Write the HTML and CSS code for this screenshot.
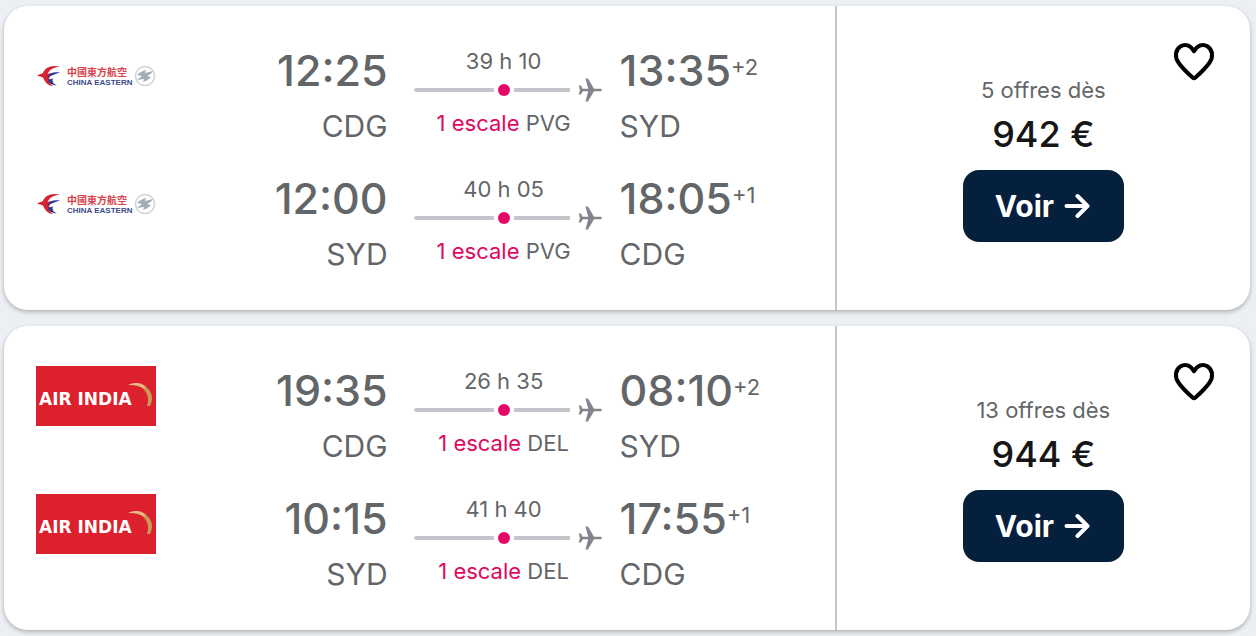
FILE: index.html
```html
<!DOCTYPE html>
<html lang="fr">
<head>
  <meta charset="UTF-8">
  <meta name="viewport" content="width=device-width, initial-scale=1.0">
  <title>Vols Paris - Sydney</title>
  <link rel="stylesheet" href="styles.css">
</head>
<body>
  <!-- shared drawings -->
  <svg class="sprite" aria-hidden="true">
    <symbol id="plane" viewBox="0 0 24 24">
      <path d="M7.500 .5h1.700c.5 0 .8.200 1.100.600l5.700 9.700h6.500c.8 0 1.300.5 1.300 1.200s-.5 1.200-1.300 1.200H16l-5.700 9.700c-.3.400-.6.600-1.100.600H7.500l2.700-10.300H4.800L2.800 16.500H.8L1.900 12 .8 7.500h2l2 3.300h5.400z"/>
    </symbol>
    <symbol id="heart" viewBox="0 0 48 48">
      <path d="M24 13.300C27.500 6.900 33 5.600 37.300 8.200c5.500 3.300 6.200 10.800 2.300 16.300C35.700 30 30 35.500 25.400 39.600c-.8.7-2 .7-2.800 0C18 35.500 12.300 30 8.400 24.500c-3.900-5.500-3.200-13 2.300-16.300C15 5.600 20.500 6.900 24 13.300z"/>
    </symbol>
    <symbol id="arrow" viewBox="0 0 26 26">
      <path d="M2.500 13h20M13.500 3l10 10-10 10"/>
    </symbol>
    <symbol id="china-eastern" viewBox="0 0 120 60">
      <path fill="#d8232f" d="M24 20.500C14 18.500 9 22 7 27l-6 2.500 6 2c2 5 5 8 10 8.700-5-5-5-9-.5-13-2.500-.2-3.500 0-5 1C13.500 23.500 17 21.500 24 20.500z"/>
      <path fill="#2b3c8f" d="M24 26.500c-7-.7-12 1-13 6.500 2-2.500 7-4.500 13-6.500zM12 33.500c0 3 3 5.500 9 6-4-2-5-4-4-7z"/>
      <circle cx="109" cy="30" r="9.500" fill="none" stroke="#d0d4d9" stroke-width="1.500"/>
      <path fill="#a3abb4" d="M101 29c3-3 6-4 9-5l-1 3 8-2c-2 3-4 4-6 5l4 1c-3 3-5 4-8 5l1-3-7 1c2-2 4-3 5-4z"/>
    </symbol>
    <symbol id="air-india" viewBox="0 0 120 60">
      <path fill="#dc202e" d="M0 0h120v60H0z"/>
      <path fill="#e9b981" d="M92 19c8-3.500 14-2 18 2l-1 3c-4-4-10-5-17-5z"/>
      <path fill="#c99a55" d="M109 20c7 5 9 12 5 20h-3c2-7 1-12-3-16z"/>
    </symbol>
  </svg>

  <main class="results">
    <article class="ticket">
      <div class="legs">
        <div class="leg">
          <svg class="airline" viewBox="0 0 120 60">
            <use href="#china-eastern"/>
            <text class="ce-cn" x="31" y="30">中國東方航空</text>
            <text class="ce-en" x="31" y="39">CHINA EASTERN</text>
          </svg>
          <div class="stop departure">
            <div class="time">12:25</div>
            <div class="airport">CDG</div>
          </div>
          <div class="route">
            <div class="duration">39 h 10</div>
            <div class="track">
              <span class="line before"></span><span class="dot"></span><span class="line after"></span>
              <svg class="plane"><use href="#plane"/></svg>
            </div>
            <div class="layover"><span class="count">1 escale</span> PVG</div>
          </div>
          <div class="stop">
            <div class="time">13:35<span class="days">+2</span></div>
            <div class="airport">SYD</div>
          </div>
        </div>
        <div class="leg">
          <svg class="airline" viewBox="0 0 120 60">
            <use href="#china-eastern"/>
            <text class="ce-cn" x="31" y="30">中國東方航空</text>
            <text class="ce-en" x="31" y="39">CHINA EASTERN</text>
          </svg>
          <div class="stop departure">
            <div class="time">12:00</div>
            <div class="airport">SYD</div>
          </div>
          <div class="route">
            <div class="duration">40 h 05</div>
            <div class="track">
              <span class="line before"></span><span class="dot"></span><span class="line after"></span>
              <svg class="plane"><use href="#plane"/></svg>
            </div>
            <div class="layover"><span class="count">1 escale</span> PVG</div>
          </div>
          <div class="stop">
            <div class="time">18:05<span class="days">+1</span></div>
            <div class="airport">CDG</div>
          </div>
        </div>
      </div>
      <div class="offer">
        <button class="save" type="button" aria-label="Enregistrer"><svg><use href="#heart"/></svg></button>
        <div class="offer-count">5 offres dès</div>
        <div class="price">942 €</div>
        <button class="view" type="button">Voir <svg><use href="#arrow"/></svg></button>
      </div>
    </article>

    <article class="ticket">
      <div class="legs">
        <div class="leg">
          <svg class="airline" viewBox="0 0 120 60">
            <use href="#air-india"/>
            <text class="ai-name" x="3" y="39">AIR INDIA</text>
          </svg>
          <div class="stop departure">
            <div class="time">19:35</div>
            <div class="airport">CDG</div>
          </div>
          <div class="route">
            <div class="duration">26 h 35</div>
            <div class="track">
              <span class="line before"></span><span class="dot"></span><span class="line after"></span>
              <svg class="plane"><use href="#plane"/></svg>
            </div>
            <div class="layover"><span class="count">1 escale</span> DEL</div>
          </div>
          <div class="stop">
            <div class="time">08:10<span class="days">+2</span></div>
            <div class="airport">SYD</div>
          </div>
        </div>
        <div class="leg">
          <svg class="airline" viewBox="0 0 120 60">
            <use href="#air-india"/>
            <text class="ai-name" x="3" y="39">AIR INDIA</text>
          </svg>
          <div class="stop departure">
            <div class="time">10:15</div>
            <div class="airport">SYD</div>
          </div>
          <div class="route">
            <div class="duration">41 h 40</div>
            <div class="track">
              <span class="line before"></span><span class="dot"></span><span class="line after"></span>
              <svg class="plane"><use href="#plane"/></svg>
            </div>
            <div class="layover"><span class="count">1 escale</span> DEL</div>
          </div>
          <div class="stop">
            <div class="time">17:55<span class="days">+1</span></div>
            <div class="airport">CDG</div>
          </div>
        </div>
      </div>
      <div class="offer">
        <button class="save" type="button" aria-label="Enregistrer"><svg><use href="#heart"/></svg></button>
        <div class="offer-count">13 offres dès</div>
        <div class="price">944 €</div>
        <button class="view" type="button">Voir <svg><use href="#arrow"/></svg></button>
      </div>
    </article>
  </main>
</body>
</html>
```
FILE: styles.css
```css
* {
  box-sizing: border-box;
}

body {
  margin: 0;
  background: #eceff3;
  color: #626669;
  font-family: Inter, Roboto, "Noto Sans CJK TC", sans-serif;
  font-size: 22px;
  line-height: 32px;
}

.sprite {
  position: absolute;
  width: 0;
  height: 0;
}

.results {
  display: flex;
  flex-direction: column;
  gap: 16px;
  padding: 6px 6px 6px 4px;
}

.ticket {
  display: grid;
  grid-template-columns: 2fr 1fr;
  background: #fff;
  border-radius: 24px;
  box-shadow: 0 2px 4px rgba(37, 32, 31, 0.3);
}

.legs {
  padding: 24px 32px;
}

.leg {
  display: grid;
  grid-template-columns: 120px 7fr 196px 6fr;
  column-gap: 18px;
  align-items: start;
  height: 128px;
  padding-top: 12px;
}

.airline {
  width: 120px;
  height: 60px;
  margin-top: 4px;
}

.departure {
  text-align: right;
}

.time {
  display: flex;
  font-size: 43px;
  font-weight: 500;
  line-height: 56px;
}

.departure .time {
  justify-content: flex-end;
}

.days {
  font-size: 22px;
  font-weight: 400;
  line-height: 50px;
}

.airport {
  font-size: 30px;
  line-height: 56px;
}

.route {
  padding-top: 3px;
  text-align: center;
}

.track {
  display: flex;
  align-items: center;
  gap: 4px;
  height: 26px;
  padding-left: 8px;
}

.line {
  height: 4px;
  background: #c2c6ca;
}

.before {
  flex: 10;
  border-radius: 2px 0 0 2px;
}

.after {
  flex: 7;
}

.dot {
  width: 12px;
  height: 12px;
  border-radius: 50%;
  background: #e70866;
}

.plane {
  width: 24px;
  height: 24px;
  margin-left: 4px;
  fill: #83858e;
}

.layover {
  padding-top: 4px;
}

.count {
  color: #e0085f;
}

.offer {
  position: relative;
  display: flex;
  flex-direction: column;
  align-items: center;
  padding-top: 68px;
  border-left: 2px solid #c2c6ca;
}

.price {
  color: #161616;
  font-size: 36px;
  font-weight: 500;
  line-height: 56px;
}

button {
  border: 0;
  font: inherit;
  cursor: pointer;
}

.view {
  display: flex;
  align-items: center;
  gap: 10px;
  height: 72px;
  margin-top: 8px;
  padding: 0 34px 0 32px;
  border-radius: 16px;
  background: #05203c;
  color: #fff;
  font-size: 30px;
  font-weight: 700;
}

.view svg {
  width: 26px;
  height: 26px;
  fill: none;
  stroke: #fff;
  stroke-width: 4;
  stroke-linecap: round;
  stroke-linejoin: round;
}

.save {
  position: absolute;
  top: 32px;
  right: 32px;
  padding: 0;
  background: none;
}

.save svg {
  display: block;
  width: 48px;
  height: 48px;
  fill: none;
  stroke: #000;
  stroke-width: 4;
  stroke-linejoin: round;
}

.ce-cn {
  fill: #d9434b;
  font: 700 10px "Noto Sans CJK TC", sans-serif;
}

.ce-en {
  fill: #3d4a8c;
  font: 700 8px "Liberation Sans", sans-serif;
}

.ai-name {
  fill: #fff;
  font: 700 17px "DejaVu Sans", sans-serif;
}
```
